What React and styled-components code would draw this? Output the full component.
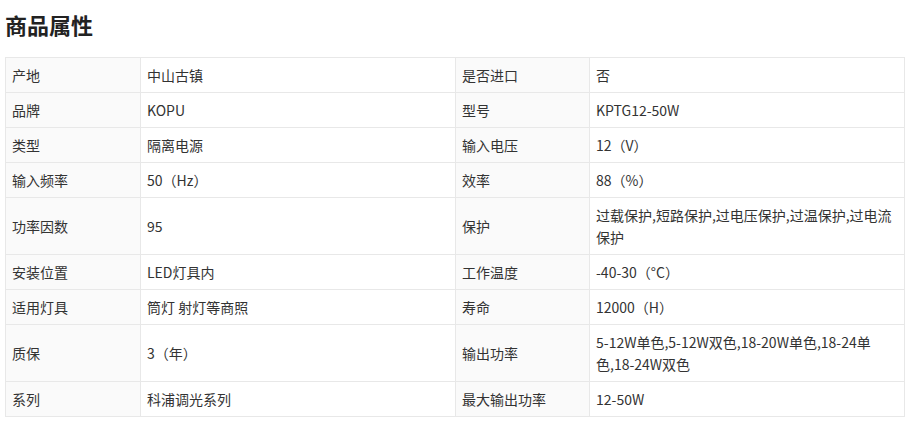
import React from "react";
import styled, { createGlobalStyle } from "styled-components";

const Global = createGlobalStyle`
  body {
    margin: 0;
    background: #fff;
    font-family: "Noto Sans CJK SC", "Noto Sans", sans-serif;
    color: #333;
  }
`;

const Page = styled.div`
  padding: 8px 5px 0 5px;
`;

const Title = styled.h2`
  margin: 0;
  height: 49px;
  font-size: 22px;
  line-height: 32px;
  font-weight: 700;
  color: #222;
`;

const Table = styled.table`
  width: 899px;
  border-collapse: collapse;
  table-layout: fixed;
  font-size: 14px;
`;

const Col = styled.col`
  width: ${(p) => p.$w}px;
`;

const Cell = styled.td`
  border: 1px solid #e8e8e8;
  padding: 6px 6px;
  line-height: 22px;
  vertical-align: middle;
  color: #333;
  background: ${(p) => (p.$label ? "#fafafa" : "#fff")};
`;

const rows = [
  ["产地", "中山古镇", "是否进口", "否"],
  ["品牌", "KOPU", "型号", "KPTG12-50W"],
  ["类型", "隔离电源", "输入电压", "12（V）"],
  ["输入频率", "50（Hz）", "效率", "88（%）"],
  ["功率因数", "95", "保护", "过载保护,短路保护,过电压保护,过温保护,过电流保护"],
  ["安装位置", "LED灯具内", "工作温度", "-40-30（°C）"],
  ["适用灯具", "筒灯 射灯等商照", "寿命", "12000（H）"],
  ["质保", "3（年）", "输出功率", "5-12W单色,5-12W双色,18-20W单色,18-24单色,18-24W双色"],
  ["系列", "科浦调光系列", "最大输出功率", "12-50W"],
];

export default function App() {
  return (
    <Page>
      <Global />
      <Title>商品属性</Title>
      <Table>
        <colgroup>
          <Col $w={135} />
          <Col $w={315} />
          <Col $w={134} />
          <Col $w={315} />
        </colgroup>
        <tbody>
          {rows.map((r, i) => (
            <tr key={i}>
              <Cell $label>{r[0]}</Cell>
              <Cell>{r[1]}</Cell>
              <Cell $label>{r[2]}</Cell>
              <Cell>{r[3]}</Cell>
            </tr>
          ))}
        </tbody>
      </Table>
    </Page>
  );
}
